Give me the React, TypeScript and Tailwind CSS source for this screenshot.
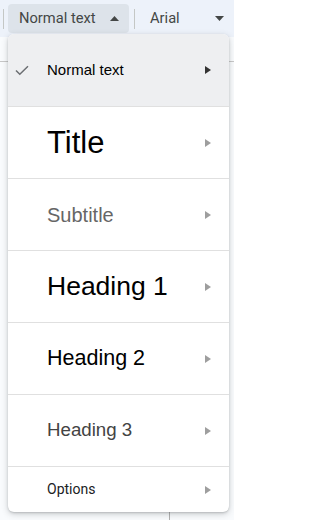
import React from "react";

const Arrow = ({ dark }: { dark?: boolean }) => (
  <svg width="6" height="8" viewBox="0 0 6 8" className="shrink-0">
    <path d="M0 0 L6 4 L0 8 Z" fill={dark ? "#333333" : "#9e9e9e"} />
  </svg>
);

const Caret = ({ up }: { up?: boolean }) => (
  <svg width="9" height="5" viewBox="0 0 9 5">
    <path d={up ? "M0 5 L4.5 0 L9 5 Z" : "M0 0 L4.5 5 L9 0 Z"} fill="#444746" />
  </svg>
);

type Item = { label: string; cls: string; h: string };

const items: Item[] = [
  { label: "Title", cls: "text-[31px] text-black", h: "h-[72px]" },
  { label: "Subtitle", cls: "text-[20px] text-[#666666]", h: "h-[72px]" },
  { label: "Heading 1", cls: "text-[26.5px] text-black", h: "h-[72px]" },
  { label: "Heading 2", cls: "text-[21.5px] text-black", h: "h-[72px]" },
  { label: "Heading 3", cls: "text-[18.7px] text-[#434343]", h: "h-[72px]" },
];

export default function App() {
  return (
    <div className="relative w-[234px] h-[520px] overflow-hidden bg-[#f9fbfd] font-['Roboto',sans-serif]">
      {/* toolbar */}
      <div className="flex h-[37px] items-center bg-[#edf2fa]">
        <div className="ml-[3px] h-[20px] w-px bg-[#c4c7c5]" />
        <div className="ml-[4px] flex h-[29px] w-[121px] items-center rounded-[4px] bg-[#dde3ea] pl-[11px] pr-[10px]">
          <span className="text-[14.7px] text-[#444746]">Normal text</span>
          <span className="ml-auto flex"><Caret up /></span>
        </div>
        <div className="ml-[5px] h-[20px] w-px bg-[#c4c7c5]" />
        <div className="flex flex-1 items-center pl-[15px] pr-[10px]">
          <span className="text-[14.7px] text-[#444746]">Arial</span>
          <span className="ml-auto flex"><Caret /></span>
        </div>
      </div>

      {/* document area */}
      <div className="mt-[24px] h-px bg-[#c7c7c7]" />
      <div className="absolute bottom-0 left-[169px] h-[10px] w-px bg-[#b0b0b0]" />

      {/* menu */}
      <div className="absolute left-[8px] top-[34px] w-[221px] overflow-hidden rounded-[6px] bg-white shadow-[0_2px_6px_rgba(60,64,67,0.25),0_1px_2px_rgba(60,64,67,0.2)]">
        <div className="flex h-[72px] items-center bg-[#eeeff1] pr-[18px]">
          <div className="flex w-[39px] justify-start pl-[7px]">
            <svg width="14" height="11" viewBox="0 0 14 11">
              <path d="M1 5.5 L4.8 9.3 L13 1.2" fill="none" stroke="#6b6e72" strokeWidth="1.5" />
            </svg>
          </div>
          <span className="font-['Liberation_Sans',Arial,sans-serif] text-[15px] text-black">Normal text</span>
          <span className="ml-auto flex"><Arrow dark /></span>
        </div>
        {items.map((it) => (
          <div key={it.label} className={`flex ${it.h} items-center border-t border-[#e0e0e0] pl-[39px] pr-[18px]`}>
            <span className={`font-['Liberation_Sans',Arial,sans-serif] leading-none ${it.cls}`}>{it.label}</span>
            <span className="ml-auto flex"><Arrow /></span>
          </div>
        ))}
        <div className="flex h-[46px] items-center border-t border-[#e0e0e0] pl-[39px] pr-[18px]">
          <span className="text-[14px] text-[#202124]">Options</span>
          <span className="ml-auto flex"><Arrow /></span>
        </div>
      </div>
    </div>
  );
}
